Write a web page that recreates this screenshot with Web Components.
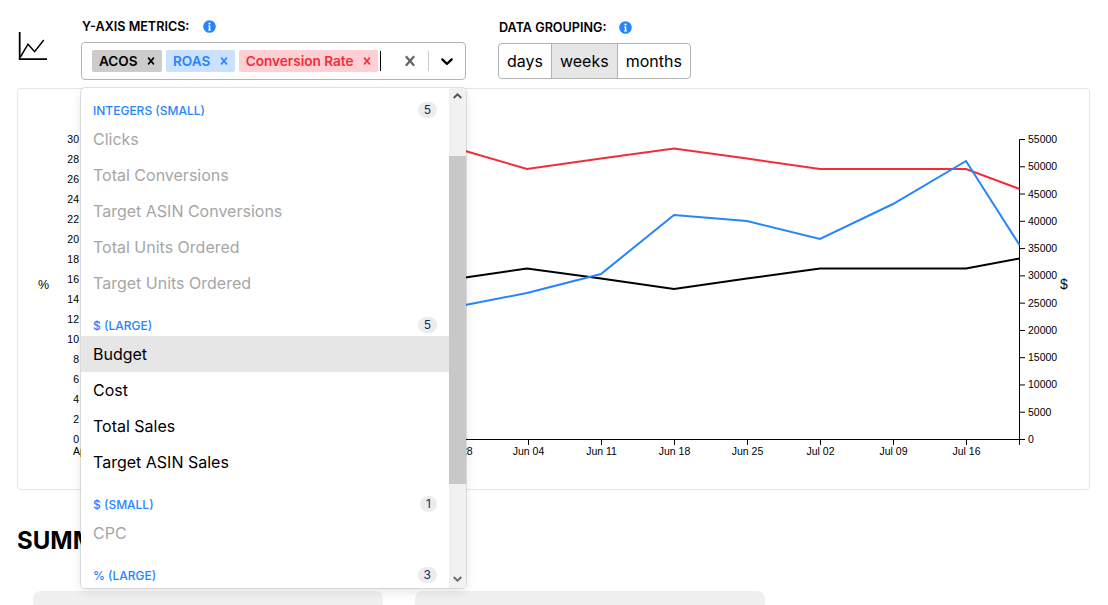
<!DOCTYPE html>
<html>
<head>
<meta charset="utf-8">
<title>Metrics</title>
<style>
  html, body { margin: 0; height: 100%; overflow: hidden; background: #fff; }
  body { font-family: Inter, "Liberation Sans", sans-serif; color: #000; }
</style>
</head>
<body>
<report-page>
  <chart-icon slot="icon"></chart-icon>
  <metric-select slot="metrics">
    <metric-chip slot="chips" bg="#cccccc" fg="#000000">ACOS</metric-chip>
    <metric-chip slot="chips" bg="#cce0ff" fg="#2684ff">ROAS</metric-chip>
    <metric-chip slot="chips" bg="#ffd0d3" fg="#f42c35">Conversion Rate</metric-chip>
    <option-group slot="menu" label="Integers (small)" count="5">
      <menu-option disabled>Clicks</menu-option>
      <menu-option disabled>Total Conversions</menu-option>
      <menu-option disabled>Target ASIN Conversions</menu-option>
      <menu-option disabled>Total Units Ordered</menu-option>
      <menu-option disabled>Target Units Ordered</menu-option>
    </option-group>
    <option-group slot="menu" label="$ (large)" count="5">
      <menu-option focused>Budget</menu-option>
      <menu-option>Cost</menu-option>
      <menu-option>Total Sales</menu-option>
      <menu-option>Target ASIN Sales</menu-option>
    </option-group>
    <option-group slot="menu" label="$ (small)" count="1">
      <menu-option disabled>CPC</menu-option>
    </option-group>
    <option-group slot="menu" label="% (large)" count="3"></option-group>
  </metric-select>
  <group-toggle slot="grouping"></group-toggle>
  <metrics-chart slot="chart"></metrics-chart>
</report-page>

<script>
const INFO_ICON = `<svg width="13" height="13" viewBox="0 0 13 13" aria-hidden="true">
  <circle cx="6.5" cy="6.5" r="6.3" fill="#2684ff"/>
  <circle cx="6.5" cy="3.6" r="1.1" fill="#fff"/>
  <path d="M5.1 5.6h2.2v3.9h.7v1H5v-1h.8V6.6h-.7z" fill="#fff"/>
</svg>`
const CROSS_PATH = 'M14.348 14.849c-0.469 0.469-1.229 0.469-1.697 0l-2.651-3.030-2.651 3.029c-0.469 0.469-1.229 0.469-1.697 0-0.469-0.469-0.469-1.229 0-1.697l2.758-3.15-2.759-3.152c-0.469-0.469-0.469-1.228 0-1.697s1.228-0.469 1.697 0l2.652 3.031 2.651-3.031c0.469-0.469 1.228-0.469 1.697 0s0.469 1.229 0 1.697l-2.758 3.152 2.758 3.15c0.469 0.469 0.469 1.229 0 1.698z'
const CHEVRON_PATH = 'M4.516 7.548c0.436-0.446 1.043-0.481 1.576 0l3.908 3.747 3.908-3.747c0.533-0.481 1.141-0.446 1.574 0 0.436 0.445 0.408 1.197 0 1.615-0.406 0.418-4.695 4.502-4.695 4.502-0.217 0.223-0.502 0.335-0.787 0.335s-0.57-0.112-0.789-0.335c0 0-4.287-4.084-4.695-4.502s-0.436-1.17 0-1.615z'

// Page frame: toolbar, chart card, summary heading and cards
class ReportPage extends HTMLElement {
  constructor() {
    super()
    this.attachShadow({ mode: 'open' })
    this.shadowRoot.innerHTML = `
      <style>
        :host { display: block; padding: 0 18px 0 17px; }
        .toolbar { display: flex; height: 88px; box-sizing: border-box; }
        .icon { width: 64px; padding-top: 32px; }
        .metrics { width: 385px; padding-top: 20px; }
        .grouping { margin-left: 32px; padding-top: 21px; }
        h2 { margin: 35px 0 0; font-size: 24px; line-height: 32px; font-weight: 700; }
        .cards { display: flex; gap: 32px; padding: 34px 0 0 16px; }
        .card { width: 350px; height: 14px; background: #f0f0f0; border-radius: 8px 8px 0 0; }
      </style>
      <div class="toolbar">
        <div class="icon"><slot name="icon"></slot></div>
        <div class="metrics"><slot name="metrics"></slot></div>
        <div class="grouping"><slot name="grouping"></slot></div>
      </div>
      <slot name="chart"></slot>
      <h2>SUMMARY</h2>
      <div class="cards"><div class="card"></div><div class="card"></div></div>
    `
  }
}

class ChartIcon extends HTMLElement {
  constructor() {
    super()
    this.attachShadow({ mode: 'open' })
    this.shadowRoot.innerHTML = `
      <style>:host { display: block; } svg { display: block; }</style>
      <svg width="30" height="29" viewBox="0 0 30 29" fill="none" stroke="#000">
        <path d="M2.7 0v27.2H30" stroke-width="1.8"/>
        <path d="M3.4 25L11 12.2l6.6 7.5L26.8 8" stroke-width="1.5"/>
      </svg>
    `
  }
}

// Multi select with its open menu, react-select style
class MetricSelect extends HTMLElement {
  constructor() {
    super()
    this.attachShadow({ mode: 'open' })
    this.shadowRoot.innerHTML = `
      <style>
        :host { display: block; position: relative; }
        .label { display: flex; align-items: center; gap: 14px; height: 13px; margin-bottom: 9px;
          font-size: 12.6px; font-weight: 600; line-height: 13px; padding-left: 1px; }
        .label svg { display: block; margin-top: -1px; }
        .control { display: flex; align-items: center; height: 38px; box-sizing: border-box;
          border: 1px solid #b3b3b3; border-radius: 4px; background: #fff; }
        .values { flex: 1; display: flex; align-items: center; padding-left: 10px; }
        .values::after { content: ""; width: 1px; height: 20px; background: #000; margin-left: -2px; }
        .indicators { display: flex; align-items: center; }
        .indicators svg { display: block; fill: currentColor; }
        .clear { color: #666; padding: 0 8px; }
        .sep { width: 1px; height: 20px; background: #ccc; }
        .drop { color: #000; padding: 0 8px; }
        .menu { position: absolute; left: 0; top: 68px; width: 385px; height: 500px; display: flex;
          background: #fff; border-radius: 4px; overflow: hidden;
          box-shadow: 0 0 0 1px rgba(0,0,0,.1), 0 4px 11px rgba(0,0,0,.1); z-index: 2; }
        .list { flex: 1; min-width: 0; padding-top: 14px; overflow: hidden; }
        .bar { width: 17px; background: #f1f1f1; position: relative; }
        .thumb { position: absolute; left: 0; right: 0; top: 68px; height: 328px; background: #c8c8c8; }
        .arrow { position: absolute; left: 4px; width: 9px; height: 6px; fill: none; stroke-width: 1.9; }
        .up { top: 5px; stroke: #505050; }
        .down { bottom: 6px; stroke: #6a6a6a; }
      </style>
      <div class="label">Y-AXIS METRICS: ${INFO_ICON}</div>
      <div class="control">
        <div class="values"><slot name="chips"></slot></div>
        <div class="indicators">
          <div class="clear"><svg width="20" height="20" viewBox="0 0 20 20"><path d="${CROSS_PATH}"/></svg></div>
          <div class="sep"></div>
          <div class="drop"><svg width="20" height="20" viewBox="0 0 20 20"><path d="${CHEVRON_PATH}"/></svg></div>
        </div>
      </div>
      <div class="menu">
        <div class="list"><slot name="menu"></slot></div>
        <div class="bar">
          <svg class="arrow up" viewBox="0 0 9 6"><path d="M.7 5L4.5 1.3 8.3 5"/></svg>
          <div class="thumb"></div>
          <svg class="arrow down" viewBox="0 0 9 6"><path d="M.7 1L4.5 4.7 8.3 1"/></svg>
        </div>
      </div>
    `
  }
}

class MetricChip extends HTMLElement {
  constructor() {
    super()
    this.attachShadow({ mode: 'open' })
    this.shadowRoot.innerHTML = `
      <style>
        :host { display: inline-flex; align-items: center; height: 22px; margin-right: 4px; border-radius: 2px;
          background: var(--bg); color: var(--fg); font-size: 13.6px; font-weight: 600; line-height: 22px; }
        .text { padding-left: 7px; }
        .x { display: flex; padding-right: 4px; margin-left: 6.3px; }
        svg { display: block; fill: currentColor; }
      </style>
      <span class="text"><slot></slot></span>
      <span class="x"><svg width="14" height="14" viewBox="0 0 20 20"><path d="${CROSS_PATH}"/></svg></span>
    `
  }
  connectedCallback() {
    this.style.setProperty('--bg', this.getAttribute('bg'))
    this.style.setProperty('--fg', this.getAttribute('fg'))
  }
}

class OptionGroup extends HTMLElement {
  constructor() {
    super()
    this.attachShadow({ mode: 'open' })
    this.shadowRoot.innerHTML = `
      <style>
        :host { display: block; padding-bottom: 16px; }
        .head { display: flex; align-items: center; justify-content: space-between; height: 16px;
          padding: 0 12px; margin-bottom: 3px; color: #2684ff; font-size: 12px; font-weight: 500;
          text-transform: uppercase; }
        .badge { min-width: 1px; padding: 2px 6px; border-radius: 2em; background: #ebecf0; color: #172b4d;
          font-size: 12px; font-weight: 400; line-height: 12px; text-align: center; }
      </style>
      <div class="head"><span class="name"></span><span class="badge"></span></div>
      <slot></slot>
    `
  }
  connectedCallback() {
    this.shadowRoot.querySelector('.name').textContent = this.getAttribute('label')
    this.shadowRoot.querySelector('.badge').textContent = this.getAttribute('count')
  }
}

class MenuOption extends HTMLElement {
  constructor() {
    super()
    this.attachShadow({ mode: 'open' })
    this.shadowRoot.innerHTML = `
      <style>
        :host { display: block; padding: 8px 12px; font-size: 16px; line-height: 20px; color: #000; }
        :host([disabled]) { color: #a6a6a6; }
        :host([focused]) { background: #e6e6e6; }
      </style>
      <slot></slot>
    `
  }
}

class GroupToggle extends HTMLElement {
  constructor() {
    super()
    this.attachShadow({ mode: 'open' })
    this.shadowRoot.innerHTML = `
      <style>
        :host { display: block; }
        .label { display: flex; align-items: center; gap: 13px; height: 13px; margin-bottom: 9px;
          font-size: 12.6px; font-weight: 600; line-height: 13px; padding-left: 1px; }
        .label svg { display: block; margin-top: -1px; }
        .buttons { display: inline-flex; height: 36px; box-sizing: border-box; border: 1px solid #b3b3b3;
          border-radius: 4px; overflow: hidden; font-size: 16px; line-height: 34px; }
        span { padding: 0 8px; }
        span + span { border-left: 1px solid #b3b3b3; }
        .on { background: #e6e6e6; }
      </style>
      <div class="label">DATA GROUPING: ${INFO_ICON}</div>
      <div class="buttons"><span>days</span><span class="on">weeks</span><span>months</span></div>
    `
  }
}

// Static line chart; the viewBox keeps coordinates in page pixels
class MetricsChart extends HTMLElement {
  constructor() {
    super()
    this.attachShadow({ mode: 'open' })
    const left = [], right = [], bottom = []
    for (let v = 0; v <= 30; v += 2) {
      const y = 439.5 - v * 10
      left.push(`<text class="t" x="79" y="${y + 3.5}" text-anchor="end">${v}</text>`)
    }
    for (let v = 0; v <= 55000; v += 5000) {
      const y = 439.5 - v * 300 / 55000
      right.push(`<line x1="1019.5" x2="1025" y1="${y}" y2="${y}"/><text class="t" x="1028" y="${y + 3.5}">${v}</text>`)
    }
    // Only the dates the open menu leaves visible
    const dates = [[88.5, 'Apr 23'], [455.5, 'May 28'], [528.5, 'Jun 04'], [601.5, 'Jun 11'], [674.5, 'Jun 18'], [747.5, 'Jun 25'], [820.5, 'Jul 02'], [893.5, 'Jul 09'], [966.5, 'Jul 16']]
    dates.forEach(([x, d]) => {
      bottom.push(`<line x1="${x}" x2="${x}" y1="439.5" y2="445"/><text class="t" x="${x}" y="455" text-anchor="middle">${d}</text>`)
    })
    this.shadowRoot.innerHTML = `
      <style>
        :host { display: block; height: 402px; box-sizing: border-box; border: 1px solid #e6e6e6; border-radius: 4px; background: #fff; }
        svg { display: block; }
        text { font-family: "Liberation Sans", Arial, sans-serif; fill: #000; }
        .t { font-size: 10.5px; }
        line { stroke: #000; stroke-width: 1; }
        polyline { fill: none; stroke-width: 2; }
      </style>
      <svg width="1071" height="400" viewBox="18 89 1071 400">
        <text x="38" y="289" style="font-size:12.5px">%</text>
        <text x="1060" y="289" style="font-size:14px">$</text>
        ${left.join('')}${right.join('')}${bottom.join('')}
        <path d="M87 439.5H1019.5M1019.5 445V139.5H1025" fill="none" stroke="#000"/>
        <polyline stroke="#f42c35" points="455,148 527,169 601,158.5 674,148.5 747,158.5 820,169 893,169 966,169 1019.5,189"/>
        <polyline stroke="#000" points="455,279 527,268.5 601,278.5 674,289 747,278.5 820,268.5 893,268.5 966,268.5 1019.5,258.5"/>
        <polyline stroke="#2684ff" points="455,307 527,293 601,274 674,215 747,221 820,239 893,204 966,161 1019.5,245"/>
      </svg>
    `
  }
}

customElements.define('report-page', ReportPage)
customElements.define('chart-icon', ChartIcon)
customElements.define('metric-select', MetricSelect)
customElements.define('metric-chip', MetricChip)
customElements.define('option-group', OptionGroup)
customElements.define('menu-option', MenuOption)
customElements.define('group-toggle', GroupToggle)
customElements.define('metrics-chart', MetricsChart)
</script>
</body>
</html>
